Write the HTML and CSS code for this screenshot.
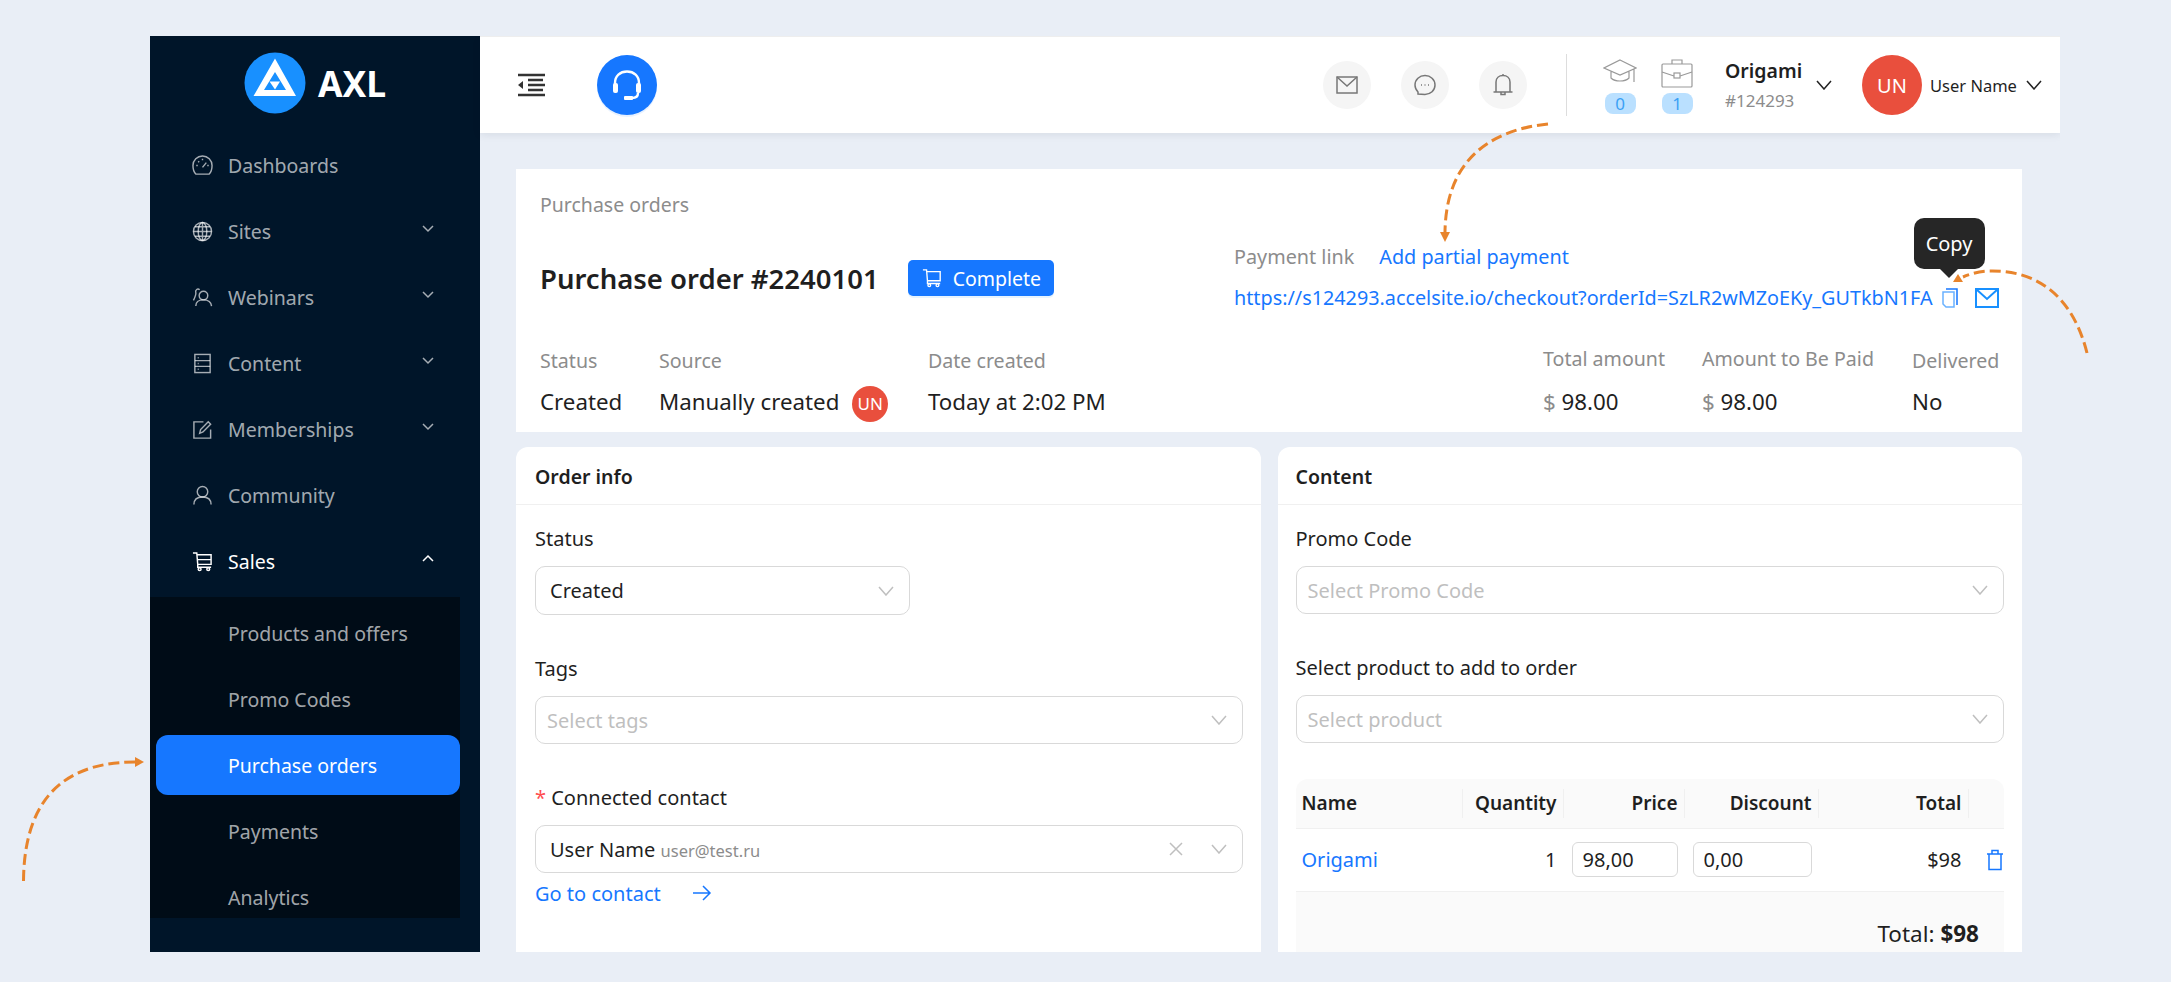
FILE: index.html
```html
<!DOCTYPE html>
<html lang="en">
<head>
  <meta charset="UTF-8">
  <title>Purchase order #2240101</title>
  <link rel="stylesheet" href="styles.css">
</head>
<body>
  <div class="frame">
    <aside class="sidebar">
      <div class="logo">
        <svg class="logo-mark" width="62" height="62" viewBox="0 0 62 62">
          <circle cx="31" cy="31" r="30.500" fill="#1890ff"/>
          <path d="M31 6.500 L52 44 H9.500 Z M31 20 L20 38 H42 Z" fill="#fff" fill-rule="evenodd"/>
          <path d="M25.500 29.500 H36 L31 37.500 Z" fill="#fff"/>
        </svg>
        <span class="logo-text">AXL</span>
      </div>
      <nav class="menu">
        <a class="item">
          <svg class="ico" viewBox="0 0 22 22"><path d="M4 20 H18 C20 18 21 14 21 11 A10 10 0 1 0 1 11 C1 14 2 18 4 20 Z"/><path d="M11 13 L15 8 M4.500 11 H6 M16 11 H17.500 M6.500 6.500 L7.500 7.500 M11 4 V5.500"/></svg>
          <span>Dashboards</span>
        </a>
        <a class="item">
          <svg class="ico" viewBox="0 0 22 22"><circle cx="11" cy="11" r="9.500"/><ellipse cx="11" cy="11" rx="4.500" ry="9.500"/><path d="M11 1.500 V20.500 M1.500 11 H20.500 M3 6 H19 M3 16 H19"/></svg>
          <span>Sites</span>
          <svg class="chev" viewBox="0 0 14 10"><path d="M2 2 L7 7 L12 2"/></svg>
        </a>
        <a class="item">
          <svg class="ico" viewBox="0 0 22 22"><circle cx="12" cy="9" r="4.500"/><path d="M4 20 C4 15 8 13.500 12 13.500 C16 13.500 20 15 20.500 20 M8 3 C6 1 3 3 4 6 C4.500 8 4 9 1.500 14"/></svg>
          <span>Webinars</span>
          <svg class="chev" viewBox="0 0 14 10"><path d="M2 2 L7 7 L12 2"/></svg>
        </a>
        <a class="item">
          <svg class="ico" viewBox="0 0 22 22"><rect x="3" y="1.500" width="16" height="19"/><path d="M3 8 H19 M3 14 H19 M6 5 H7 M6 11 H7 M6 17 H7"/></svg>
          <span>Content</span>
          <svg class="chev" viewBox="0 0 14 10"><path d="M2 2 L7 7 L12 2"/></svg>
        </a>
        <a class="item">
          <svg class="ico" viewBox="0 0 22 22"><path d="M19.500 11 V20 H2 V3 H12"/><path d="M8 15 L9 11 L17 3 L19.500 5.500 L11.500 13.500 Z"/></svg>
          <span>Memberships</span>
          <svg class="chev" viewBox="0 0 14 10"><path d="M2 2 L7 7 L12 2"/></svg>
        </a>
        <a class="item">
          <svg class="ico" viewBox="0 0 22 22"><circle cx="11" cy="7" r="5.500"/><path d="M2 20.500 C2 15 6 12.500 11 12.500 C16 12.500 20 15 20 20.500"/></svg>
          <span>Community</span>
        </a>
        <a class="item open">
          <svg class="ico" viewBox="0 0 22 22"><path d="M1 2 H5 L6 14 H20 V4 H5.500 M5.500 9 H20 M6 14 L6 17 H20"/><circle cx="8" cy="19" r="1.500"/><circle cx="17" cy="19" r="1.500"/></svg>
          <span>Sales</span>
          <svg class="chev" viewBox="0 0 14 10"><path d="M2 7 L7 2 L12 7"/></svg>
        </a>
        <div class="submenu">
          <a class="subitem">Products and offers</a>
          <a class="subitem">Promo Codes</a>
          <a class="subitem active">Purchase orders</a>
          <a class="subitem">Payments</a>
          <a class="subitem">Analytics</a>
        </div>
      </nav>
    </aside>

    <div class="main">
      <header class="topbar">
        <svg class="collapse" width="28" height="24" viewBox="0 0 28 24"><path d="M1 2 H28 M11 12 H28 M11 7 H26 M11 17 H26 M1 22 H28"/><path class="solid" d="M1 12 L6 8 V16 Z"/></svg>
        <div class="support">
          <svg width="34" height="34" viewBox="0 0 34 34"><path d="M5 20 V15 C5 8 10 3.500 17 3.500 C24 3.500 29 8 29 15 V20"/><rect class="solid" x="3" y="15" width="5" height="10" rx="2"/><rect class="solid" x="26" y="15" width="5" height="10" rx="2"/><path d="M28 25 C28 28 26 30 22 30"/><rect class="solid" x="14" y="28" width="9" height="4" rx="1"/></svg>
        </div>
        <div class="top-right">
          <div class="round-btn"><svg width="22" height="22" viewBox="0 0 22 22"><rect x="1" y="3" width="20" height="16"/><path d="M1 3 L11 12 L21 3"/></svg></div>
          <div class="round-btn"><svg width="22" height="22" viewBox="0 0 22 22"><path d="M4 20 L4 18 C2 16 1 14 1 11 C1 5.500 5.500 1.500 11 1.500 C16.500 1.500 21 5.500 21 11 C21 16.500 16.500 20.500 11 20.500 Z"/><path d="M7 11 H8 M10.500 11 H11.500 M14 11 H15"/></svg></div>
          <div class="round-btn"><svg width="22" height="24" viewBox="0 0 22 24"><path d="M4 19 V9 C4 5 7 2.500 11 2.500 C15 2.500 18 5 18 9 V19 M1.500 19 H20.500 M11 1 V2.500 M9 19 V21.500 H13 V19"/></svg></div>
          <div class="divider"></div>
          <div class="counter">
            <svg width="34" height="30" viewBox="0 0 34 30"><path d="M17 2 L33 10 L17 17 L1 10 Z M8 13 V20 C12 24 22 24 26 20 V13 M31 11 V24"/></svg>
            <span class="count">0</span>
          </div>
          <div class="counter">
            <svg width="34" height="30" viewBox="0 0 34 30"><rect x="2" y="6" width="30" height="23" rx="1"/><path d="M12 6 V2 H22 V6 M2 14 L14 18 M32 14 L20 18"/><rect x="14" y="15" width="6" height="5"/></svg>
            <span class="count">1</span>
          </div>
          <div class="account">
            <strong>Origami</strong>
            <span>#124293</span>
          </div>
          <svg class="top-chev acc-chev" viewBox="0 0 16 10"><path d="M1 1 L8 9 L15 1"/></svg>
          <div class="avatar">UN</div>
          <span class="user-name">User Name</span>
          <svg class="top-chev" viewBox="0 0 16 10"><path d="M1 1 L8 9 L15 1"/></svg>
        </div>
      </header>

      <div class="content">
        <section class="page-card">
          <div class="crumb">Purchase orders</div>
          <div class="head-row">
            <div class="title-wrap">
              <h1>Purchase order #2240101</h1>
              <button class="complete">
                <svg width="20" height="20" viewBox="0 0 22 22"><path d="M1 2 H5 L6 14 H20 V4 H5.500 M6 14 L6 17 H20"/><circle cx="8" cy="19" r="1.500"/><circle cx="17" cy="19" r="1.500"/></svg>
                Complete
              </button>
            </div>
            <div class="pay">
              <div class="pay-line">
                <span class="label">Payment link</span>
                <a class="link add-part">Add partial payment</a>
              </div>
              <div class="pay-line">
                <a class="link">https://s124293.accelsite.io/checkout?orderId=SzLR2wMZoEKy_GUTkbN1FA</a>
                <span class="copy-wrap">
                  <svg class="copy" width="16" height="20" viewBox="0 0 16 20"><path d="M4 1 H15 V17"/><path class="light" d="M1 4 H12 V19 H4 L1 16 Z"/></svg>
                  <span class="tooltip">Copy</span>
                </span>
                <svg class="mail" width="24" height="20" viewBox="0 0 24 20"><rect x="1" y="1" width="22" height="18"/><path d="M1 1 L12 11 L23 1"/></svg>
              </div>
            </div>
          </div>
          <div class="stats">
            <div class="stat s-status"><span class="label">Status</span><span class="val">Created</span></div>
            <div class="stat s-source"><span class="label">Source</span><span class="val">Manually created <i class="mini">UN</i></span></div>
            <div class="stat"><span class="label">Date created</span><span class="val">Today at 2:02 PM</span></div>
            <div class="stat s-total"><span class="label">Total amount</span><span class="val"><em>$</em> 98.00</span></div>
            <div class="stat s-paid"><span class="label">Amount to Be Paid</span><span class="val"><em>$</em> 98.00</span></div>
            <div class="stat s-del"><span class="label">Delivered</span><span class="val">No</span></div>
          </div>
        </section>

        <div class="columns">
          <section class="card">
            <h2>Order info</h2>
            <div class="card-body">
              <label>Status</label>
              <div class="select short"><span>Created</span><svg class="sel-chev" viewBox="0 0 16 10"><path d="M1 1 L8 9 L15 1"/></svg></div>
              <label>Tags</label>
              <div class="select ph"><span>Select tags</span><svg class="sel-chev" viewBox="0 0 16 10"><path d="M1 1 L8 9 L15 1"/></svg></div>
              <label><b class="req">*</b> Connected contact</label>
              <div class="select low"><span>User Name <small>user@test.ru</small></span>
                <svg class="sel-x" viewBox="0 0 14 14"><path d="M1 1 L13 13 M13 1 L1 13"/></svg>
                <svg class="sel-chev" viewBox="0 0 16 10"><path d="M1 1 L8 9 L15 1"/></svg>
              </div>
              <a class="link go">Go to contact
                <svg width="20" height="16" viewBox="0 0 20 16"><path d="M1 8 H18 M11 1 L18 8 L11 15"/></svg>
              </a>
            </div>
          </section>

          <section class="card">
            <h2>Content</h2>
            <div class="card-body">
              <label>Promo Code</label>
              <div class="select ph"><span>Select Promo Code</span><svg class="sel-chev" viewBox="0 0 16 10"><path d="M1 1 L8 9 L15 1"/></svg></div>
              <label>Select product to add to order</label>
              <div class="select ph"><span>Select product</span><svg class="sel-chev" viewBox="0 0 16 10"><path d="M1 1 L8 9 L15 1"/></svg></div>
              <table class="lines">
                <colgroup>
                  <col class="c1"><col class="c2"><col class="c3"><col class="c4"><col class="c5"><col class="c6">
                </colgroup>
                <thead>
                  <tr><th class="left">Name</th><th>Quantity</th><th>Price</th><th>Discount</th><th>Total</th><th></th></tr>
                </thead>
                <tbody>
                  <tr>
                    <td class="left"><a class="link">Origami</a></td>
                    <td>1</td>
                    <td><input class="num" value="98,00"></td>
                    <td><input class="num" value="0,00"></td>
                    <td>$98</td>
                    <td class="del"><svg width="18" height="22" viewBox="0 0 18 22"><path d="M1 5 H17 M6 5 V1.500 H12 V5 M3 5 V20.500 H15 V5"/></svg></td>
                  </tr>
                </tbody>
              </table>
              <div class="grand">Total: <strong>$98</strong></div>
            </div>
          </section>
        </div>
      </div>
    </div>
  </div>

  <!-- annotation arrows drawn over the screenshot -->
  <svg class="arrows" width="2171" height="982" viewBox="0 0 2171 982">
    <path d="M23.500 881 C24 815 50 762 135 762"/>
    <polygon points="144,762 135,757 135,767"/>
    <path d="M1548 124 C1490 130 1446 160 1445 232"/>
    <polygon points="1445,242 1440,232 1450,232"/>
    <path d="M2087 353 C2075 305 2045 270 1990 271 C1980 271 1970 274 1963 277"/>
    <polygon points="1953,282 1963,282 1958,274"/>
  </svg>
</body>
</html>
```

FILE: styles.css
```css
* {
  box-sizing: border-box;
}
html, body {
  height: 982px;
  overflow: hidden;
}
body {
  margin: 0;
  background: #e9eef6;
  color: #1f1f1f;
  font-family: "Noto Sans", "Open Sans", Arial, sans-serif;
  font-size: 19.500px;
}
svg {
  fill: none;
  stroke: currentColor;
  stroke-width: 1.5;
  flex: none;
}
.solid {
  fill: currentColor;
  stroke: none;
}
a {
  text-decoration: none;
}
.frame {
  display: flex;
  width: 1910px;
  height: 916px;
  margin: 36px 0 0 150px;
  overflow: hidden;
}

/* sidebar */
.sidebar {
  width: 330px;
  flex: none;
  background: #001529;
  color: rgba(255, 255, 255, 0.65);
}
.logo {
  display: flex;
  align-items: center;
  gap: 12px;
  height: 97px;
  padding: 0 0 3px 94px;
}
.logo-mark {
  stroke: none;
}
.logo-text {
  color: #fff;
  font-size: 35.500px;
  font-weight: 700;
}
.item {
  display: flex;
  align-items: center;
  height: 66px;
  padding-left: 42px;
}
.item span {
  position: relative;
  top: -1px;
}
.item .ico {
  width: 21px;
  height: 21px;
  margin-right: 15px;
  position: relative;
  top: -1px;
}
.item .chev {
  width: 14px;
  height: 10px;
  margin-left: auto;
  margin-right: 45px;
  position: relative;
  top: -3px;
}
.item.open {
  color: #fff;
}
.submenu {
  display: flex;
  flex-direction: column;
  gap: 6px;
  height: 321px;
  width: 310px;
  margin-top: 2px;
  padding-top: 6px;
  background: #000c17;
  overflow: hidden;
}
.subitem {
  display: flex;
  align-items: center;
  flex: none;
  height: 60px;
  margin-left: 6px;
  padding-left: 72px;
  border-radius: 12px;
}
.subitem.active {
  background: #1677ff;
  color: #fff;
}

/* top bar */
.main {
  flex: 1;
  display: flex;
  flex-direction: column;
  min-width: 0;
}
.topbar {
  display: flex;
  align-items: center;
  height: 97px;
  flex: none;
  background: #fff;
  border-top: 1px solid #eee;
  box-shadow: 0 2px 8px rgba(0, 21, 41, 0.08);
  padding-left: 37px;
  position: relative;
}
.collapse {
  color: #333;
  stroke-width: 2.4;
}
.support {
  display: flex;
  align-items: center;
  justify-content: center;
  width: 60px;
  height: 60px;
  margin-left: 52px;
  border-radius: 50%;
  background: #1677ff;
  color: #fff;
  box-shadow: 0 2px 0 rgba(22, 119, 255, 0.1);
}
.support svg {
  stroke-width: 2.4;
}
.top-right {
  display: flex;
  align-items: center;
  margin-left: auto;
  height: 100%;
  padding-right: 18px;
}
.round-btn {
  display: flex;
  align-items: center;
  justify-content: center;
  width: 48px;
  height: 48px;
  margin-right: 30px;
  border-radius: 50%;
  background: #f5f5f5;
  color: #777;
}
.round-btn:nth-child(3) {
  margin-right: 39px;
}
.divider {
  width: 1px;
  height: 62px;
  margin-right: 36px;
  background: #ddd;
}
.counter {
  display: flex;
  flex-direction: column;
  align-items: center;
  width: 34px;
  margin-right: 23px;
  color: #999;
  position: relative;
  top: 1px;
}
.counter svg {
  stroke-width: 1.2;
}
.count {
  width: 31px;
  height: 21px;
  margin-top: 5px;
  border-radius: 8px;
  background: #bae0ff;
  color: #3aa0f5;
  font-size: 17px;
  line-height: 21px;
  text-align: center;
}
.account {
  display: flex;
  flex-direction: column;
  margin-left: 8px;
  width: 91px;
  position: relative;
  top: 1px;
}
.account strong {
  font-size: 19.500px;
  font-weight: 600;
  line-height: 30px;
}
.account span {
  color: #8c8c8c;
  font-size: 17px;
  line-height: 30px;
}
.top-chev {
  width: 16px;
  height: 10px;
  color: #222;
}
.acc-chev {
  margin-right: 30px;
}
.avatar {
  display: flex;
  align-items: center;
  justify-content: center;
  width: 60px;
  height: 60px;
  border-radius: 50%;
  background: #e94f3d;
  color: #fff;
  font-size: 20px;
}
.user-name {
  width: 96px;
  margin-left: 8px;
  font-size: 16.500px;
}

/* page head */
.content {
  padding: 36px 38px 0 36px;
}
.page-card {
  height: 263px;
  padding: 22px 22px 0 24px;
  background: #fff;
}
.crumb {
  height: 28px;
  color: #8c8c8c;
  font-size: 19.500px;
  line-height: 27px;
}
.head-row {
  display: flex;
  justify-content: space-between;
  height: 82px;
  margin-top: 18px;
}
.title-wrap {
  display: flex;
  align-items: center;
}
h1 {
  margin: 0;
  font-size: 27.500px;
  font-weight: 600;
}
.complete {
  display: flex;
  align-items: center;
  gap: 11px;
  height: 36px;
  margin-left: 29px;
  padding: 0 13px 0 14px;
  border: none;
  border-radius: 5px;
  background: #1677ff;
  color: #fff;
  font: inherit;
  box-shadow: 0 2px 0 rgba(5, 145, 255, 0.1);
}
.pay {
  width: 768px;
  margin-top: -1px;
  margin-right: -2px;
}
.pay-line {
  display: flex;
  align-items: center;
  height: 41px;
  font-size: 19.800px;
  white-space: nowrap;
}
.label {
  color: #8c8c8c;
}
.link {
  color: #1677ff;
}
.add-part {
  margin-left: 25px;
}
.copy-wrap {
  position: relative;
  display: flex;
  margin-left: 9px;
  color: #1677ff;
}
.copy .light {
  stroke: #69b1ff;
}
.tooltip {
  position: absolute;
  left: -28px;
  bottom: 39px;
  width: 71px;
  height: 51px;
  border-radius: 10px;
  background: #262626;
  color: #fff;
  font-size: 20px;
  line-height: 51px;
  text-align: center;
}
.tooltip::after {
  content: "";
  position: absolute;
  left: 26px;
  top: 51px;
  border: 9px solid transparent;
  border-top-color: #262626;
  border-bottom: none;
}
.mail {
  margin-left: 17px;
  color: #1890ff;
  stroke-width: 2;
}
.stats {
  display: flex;
  margin-top: 21px;
}
.stat {
  display: flex;
  flex-direction: column;
  white-space: nowrap;
}
.stat span {
  line-height: 41px;
}
.stat .label {
  font-size: 19.600px;
}
.stat .val {
  font-size: 22.300px;
}
.s-status {
  width: 119px;
}
.s-source {
  width: 269px;
}
.s-total {
  width: 159px;
  margin-left: auto;
}
.s-paid {
  width: 210px;
}
.s-del {
  width: 88px;
}
.s-total .label, .s-paid .label {
  line-height: 37px;
  margin-bottom: 4px;
}
.val em {
  color: #8c8c8c;
  font-style: normal;
}
.mini {
  display: inline-block;
  width: 36px;
  height: 36px;
  margin-left: 7px;
  border-radius: 50%;
  background: #e94f3d;
  color: #fff;
  font-size: 17px;
  font-style: normal;
  line-height: 36px;
  text-align: center;
  vertical-align: middle;
}

/* cards */
.columns {
  display: flex;
  gap: 17px;
  margin-top: 15px;
}
.card {
  flex: 1;
  min-width: 0;
  height: 600px;
  border-radius: 12px 12px 0 0;
  background: #fff;
}
h2 {
  height: 58px;
  margin: 0;
  padding: 0 18px;
  border-bottom: 1px solid #f0f0f0;
  font-size: 19.500px;
  font-weight: 600;
  line-height: 60px;
}
.card:first-child h2 {
  padding-left: 19px;
}
.card-body {
  padding: 20px 18px 0;
}
.card:first-child .card-body {
  padding-left: 19px;
}
label {
  display: block;
  height: 28px;
  margin-bottom: 13px;
  font-size: 20px;
  line-height: 27px;
}
.req {
  color: #ff4d4f;
  font-weight: 400;
}
.select {
  display: flex;
  align-items: center;
  height: 48px;
  margin-bottom: 40px;
  padding: 0 15px 0 14px;
  border: 1px solid #d9d9d9;
  border-radius: 10px;
  font-size: 20px;
}
.select span {
  margin-right: auto;
}
.select.short {
  width: 375px;
  height: 49px;
}
.select.ph {
  color: #bfbfbf;
  padding-left: 11px;
}
.select.low {
  margin-bottom: 6px;
}
.select small {
  color: #8c8c8c;
  font-size: 16.500px;
}
.sel-chev {
  width: 16px;
  height: 10px;
  color: #bfbfbf;
}
.sel-x {
  width: 14px;
  height: 14px;
  margin-right: 28px;
  color: #bfbfbf;
}
.go {
  display: flex;
  align-items: center;
  gap: 31px;
  height: 28px;
  font-size: 20px;
}

/* order lines */
.lines {
  width: 708px;
  margin-top: -4px;
  border-collapse: collapse;
  table-layout: fixed;
  font-size: 20px;
}
.c1 { width: 167px; }
.c2 { width: 101px; }
.c3 { width: 121px; }
.c4 { width: 134px; }
.c5 { width: 150px; }
.c6 { width: 35px; }
.lines th {
  height: 49px;
  padding: 0 7px 0 6px;
  background: #fafafa;
  border-bottom: 1px solid #f0f0f0;
  font-size: 19px;
  font-weight: 600;
  text-align: right;
  position: relative;
}
.lines th:first-child {
  border-top-left-radius: 12px;
}
.lines th:last-child {
  border-top-right-radius: 12px;
}
.lines th:not(:last-child)::after {
  content: "";
  position: absolute;
  right: 0;
  top: 10px;
  bottom: 10px;
  width: 1px;
  background: #f0f0f0;
}
.lines td {
  height: 63px;
  padding: 0 7px 0 6px;
  border-bottom: 1px solid #f0f0f0;
  text-align: right;
}
.lines .left {
  text-align: left;
  padding-left: 6px;
}
.num {
  display: block;
  width: 106px;
  height: 35px;
  margin-left: auto;
  padding: 0 10px;
  border: 1px solid #d9d9d9;
  border-radius: 6px;
  color: #1f1f1f;
  font: inherit;
}
.lines td:nth-child(4) .num {
  width: 119px;
}
.lines td.del {
  padding: 0;
  color: #1677ff;
  text-align: right;
}
.del svg {
  display: block;
  margin-left: auto;
}
.grand {
  height: 120px;
  padding: 26px 25px 0 0;
  background: #fafafa;
  font-size: 22.500px;
  text-align: right;
}
.grand strong {
  font-weight: 700;
}

/* annotation arrows */
.arrows {
  position: absolute;
  left: 0;
  top: 0;
  pointer-events: none;
}
.arrows path {
  stroke: #e8842c;
  stroke-width: 3;
  stroke-dasharray: 11 5;
}
.arrows polygon {
  fill: #e8842c;
  stroke: none;
}
```
